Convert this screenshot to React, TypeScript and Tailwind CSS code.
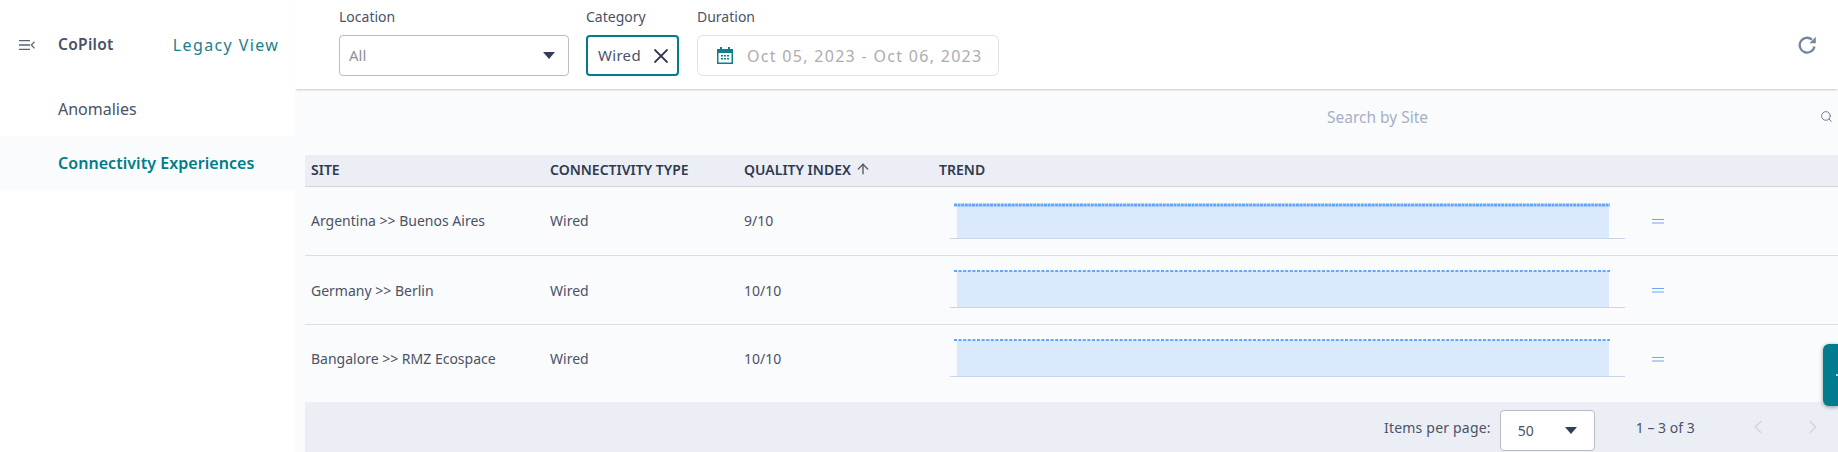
import React from 'react';
import { ChevronLeft, ChevronRight, Search, X, ArrowUp } from 'lucide-react';

const ROWS = [
  { site: 'Argentina >> Buenos Aires', type: 'Wired', index: '9/10', dash: '3 0.6', width: 3, top: 6 },
  { site: 'Germany >> Berlin', type: 'Wired', index: '10/10', dash: '3 1.6', width: 2.2, top: 3 },
  { site: 'Bangalore >> RMZ Ecospace', type: 'Wired', index: '10/10', dash: '3 1.6', width: 2.2, top: 3 },
];

const Caret = () => (
  <svg width="12" height="7" viewBox="0 0 12 7" className="shrink-0">
    <path d="M0 0h12L6 7z" fill="#343f56" />
  </svg>
);

const Trend = ({ dash, width, top }: { dash: string; width: number; top: number }) => (
  <svg width="675" height="44" viewBox="0 0 675 44" className="block">
    <rect x="7" y={top} width="652" height={39 - top} fill="#dbe9fc" />
    <line x1="4" y1={top} x2="660" y2={top} stroke="#64a6fa" strokeWidth={width} strokeDasharray={dash} />
    <line x1="0" y1="39.5" x2="675" y2="39.5" stroke="#c9d5e8" strokeWidth="1" />
  </svg>
);

const EqualIcon = () => (
  <svg width="12" height="5" viewBox="0 0 12 5" className="block">
    <path d="M0 .5h12M0 4h12" stroke="#6ea5f7" strokeWidth="1.2" />
  </svg>
);

export default function App() {
  return (
    <div className="relative flex h-[452px] w-[1838px] overflow-hidden bg-white font-['Noto_Sans',sans-serif] text-[#4a5268]">
      {/* sidebar */}
      <aside className="w-[295px] shrink-0 bg-white">
        <div className="flex h-[89px] items-center pl-[19px]">
          <svg width="16" height="10" viewBox="0 0 16 10" className="shrink-0">
            <path d="M0 .7h11M0 5h11M0 9.3h11M15.5 1.6 12.4 5l3.1 3.4" fill="none" stroke="#5a6478" strokeWidth="1.3" />
          </svg>
          <span className="ml-[23px] text-[15.5px] font-semibold tracking-[0.3px] text-[#4a5268]">CoPilot</span>
          <span className="ml-[59px] text-[16px] tracking-[1.4px] text-[#1b7f8c]">Legacy View</span>
        </div>
        <div className="flex h-[47px] items-center pb-[7px] pl-[58px] text-[16px]">Anomalies</div>
        <div className="flex h-[54px] items-center bg-[#fafbfd] pl-[58px] text-[16px] font-semibold tracking-[0.05px] text-[#007c8a]">
          Connectivity Experiences
        </div>
      </aside>

      <main className="flex min-w-0 flex-1 flex-col bg-[#fafbfd]">
        {/* filters */}
        <header className="z-10 flex h-[89px] shrink-0 items-start bg-white pl-[44px] shadow-[0_2px_2px_-1px_rgba(0,0,0,0.2)]">
          <div className="w-[230px] pt-[8px]">
            <div className="h-[27px] text-[14px] leading-[18px]">Location</div>
            <div className="flex h-[41px] items-center justify-between rounded-[4px] border border-[#b9bcc4] pl-[9px] pr-[13px] text-[15px] text-[#8d9096]">
              All
              <Caret />
            </div>
          </div>
          <div className="ml-[17px] w-[93px] pt-[8px]">
            <div className="h-[27px] text-[14px] leading-[18px]">Category</div>
            <div className="flex h-[41px] items-center rounded-[4px] border-2 border-[#007c8a] pl-[10px] text-[15px] tracking-[0.3px]">
              Wired
              <X size={24} strokeWidth={1.8} className="ml-[8px] text-[#343f56]" />
            </div>
          </div>
          <div className="ml-[18px] w-[302px] pt-[8px]">
            <div className="h-[27px] text-[14px] leading-[18px]">Duration</div>
            <div className="flex h-[41px] items-center rounded-[6px] border border-[#e2e3e6] pl-[19px]">
              <svg width="16" height="17" viewBox="0 0 16 17" className="shrink-0">
                <path d="M3 0h2v2h6V0h2v2h3v15H0V2h3z" fill="#0f7f8d" />
                <path d="M1.5 6h13v9.5h-13z" fill="#fff" />
                <path d="M4 8h2v1.6H4zM7 8h2v1.6H7zM10 8h2v1.6h-2zM4 11h2v1.6H4zM7 11h2v1.6H7zM10 11h2v1.6h-2z" fill="#0f7f8d" />
              </svg>
              <span className="ml-[14px] whitespace-nowrap text-[16px] tracking-[1.3px] text-[#adadad]">
                Oct 05, 2023 - Oct 06, 2023
              </span>
            </div>
          </div>
          <svg width="19" height="19" viewBox="0 0 19 19" className="ml-auto mr-[21px] mt-[36px]">
            <path d="M16.4 10.5A7.4 7.4 0 1 1 14 3.6" fill="none" stroke="#77869f" strokeWidth="2.3" />
            <path d="M17.8.8v6.4h-6.4z" fill="#77869f" />
          </svg>
        </header>

        {/* search */}
        <div className="flex h-[66px] shrink-0 items-center pb-[9px] pr-[5px] text-[15.5px] text-[#a5b0c6]">
          <span className="ml-[1032px]">Search by Site</span>
          <Search size={13} strokeWidth={1.8} className="ml-auto -translate-y-[1px] text-[#6f7d95]" />
        </div>

        {/* table */}
        <div className="ml-[10px] flex min-h-0 flex-1 flex-col">
          <div className="flex h-[32px] shrink-0 items-center border-b border-[#d2d5db] bg-[#ebeef5] pb-[3px] pl-[6px] text-[14px] font-semibold text-[#2f3a4f]">
            <div className="w-[239px]">SITE</div>
            <div className="w-[194px]">CONNECTIVITY TYPE</div>
            <div className="flex w-[195px] items-center">
              QUALITY INDEX
              <ArrowUp size={16} strokeWidth={2.2} className="ml-[4px] text-[#5f6369]" />
            </div>
            <div>TREND</div>
          </div>
          <div className="flex-1">
            {ROWS.map((r, i) => (
              <div
                key={r.site}
                className={`flex h-[68px] items-center pl-[6px] text-[14px] ${i < 2 ? 'box-content border-b border-[#dcdee3]' : ''}`}
              >
                <div className={`w-[239px] ${i === 1 ? '' : '-translate-y-[1px]'}`}>{r.site}</div>
                <div className={`w-[194px] ${i === 1 ? '' : '-translate-y-[1px]'}`}>{r.type}</div>
                <div className={`w-[206px] ${i === 1 ? '' : '-translate-y-[1px]'}`}>{r.index}</div>
                <div className="w-[702px]">
                  <Trend dash={r.dash} width={r.width} top={r.top} />
                </div>
                <EqualIcon />
              </div>
            ))}
          </div>
          <div className="flex h-[50px] shrink-0 items-center bg-[#ebeef5] text-[14px]">
            <span className="ml-[1079px] tracking-[0.2px]">Items per page:</span>
            <div className="ml-[9px] flex h-[41px] w-[95px] translate-y-[3px] items-center justify-between rounded-[4px] border border-[#b9bcc4] bg-white pl-[17px] pr-[17px]">
              50
              <Caret />
            </div>
            <span className="ml-[41px]">1 – 3 of 3</span>
            <ChevronLeft size={22} strokeWidth={1.8} className="ml-[52px] text-[#d4d7de]" />
            <ChevronRight size={22} strokeWidth={1.8} className="ml-[33px] text-[#d4d7de]" />
          </div>
        </div>
      </main>

      {/* floating tab */}
      <div className="absolute left-[1823px] top-[344px] flex h-[62px] w-[15px] items-center justify-end rounded-l-[6px] bg-[#007c8f] shadow-[0_1px_4px_rgba(0,0,0,0.4)]">
        <div className="h-[2px] w-[2px] bg-white/70" />
      </div>
    </div>
  );
}
